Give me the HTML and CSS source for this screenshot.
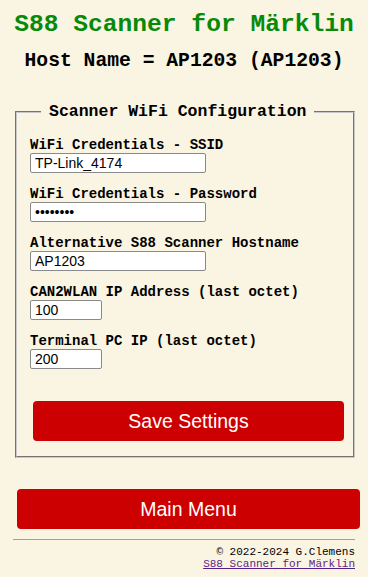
FILE: index.html
```html
<!DOCTYPE html>
<html>
<head>
<meta charset="utf-8">
<link rel="stylesheet" href="styles.css">
</head>
<body>
<h1 class="title">S88 Scanner for Märklin</h1>
<h2 class="host">Host Name = AP1203 (AP1203)</h2>
<fieldset class="box">
  <legend class="legend">Scanner WiFi Configuration</legend>
  <div class="field">
    <label class="lbl">WiFi Credentials - SSID</label>
    <input class="inp wide" type="text" value="TP-Link_4174">
  </div>
  <div class="field">
    <label class="lbl">WiFi Credentials - Password</label>
    <input class="inp wide" type="password" value="12345678">
  </div>
  <div class="field">
    <label class="lbl">Alternative S88 Scanner Hostname</label>
    <input class="inp wide" type="text" value="AP1203">
  </div>
  <div class="field">
    <label class="lbl">CAN2WLAN IP Address (last octet)</label>
    <input class="inp narrow" type="text" value="100">
  </div>
  <div class="field">
    <label class="lbl">Terminal PC IP (last octet)</label>
    <input class="inp narrow" type="text" value="200">
  </div>
  <button class="btn save">Save Settings</button>
</fieldset>
<button class="btn main">Main Menu</button>
<hr class="rule">
<div class="foot">
  <div>© 2022-2024 G.Clemens</div>
  <a class="flink" href="#">S88 Scanner for Märklin</a>
</div>
</body>
</html>
```
FILE: styles.css
```css
html, body { margin: 0; padding: 0; }
body {
  background: #faf4e2;
  font-family: "Liberation Mono", "DejaVu Sans Mono", monospace;
  color: #000;
  width: 368px;
  height: 577px;
  overflow: hidden;
}
.title {
  margin: 10px 0 0 0;
  text-align: center;
  color: #078a07;
  font-size: 24.6px;
  font-weight: bold;
  line-height: 30px;
}
.host {
  margin: 9px 0 0 0;
  text-align: center;
  font-size: 19.7px;
  font-weight: bold;
  line-height: 24px;
}
.box {
  margin: 29px 0 0 15px;
  width: 338px;
  box-sizing: border-box;
  border: 2px groove #c8c8c8;
  padding: 16px 9px 15px 13px;
  display: flex;
  flex-direction: column;
  gap: 14px;
}
.legend {
  font-size: 16.5px;
  font-weight: bold;
  padding: 0 8px;
  margin-left: 11px;
  line-height: 20px;
}
.field { display: flex; flex-direction: column; }
.lbl {
  font-size: 14px;
  font-weight: bold;
  line-height: 15px;
}
.inp {
  height: 20px;
  box-sizing: border-box;
  border: 1px solid #8a8a8a;
  border-radius: 2px;
  background: #fff;
  font-family: "Liberation Sans", Arial, sans-serif;
  font-size: 14px;
  padding: 0 4px;
  margin: 0;
  color: #000;
}
.wide { width: 176px; }
.narrow { width: 72px; }
.btn {
  border: none;
  border-radius: 4px;
  background: #cc0000;
  color: #fff;
  font-family: "Liberation Sans", Arial, sans-serif;
  font-size: 19.5px;
  height: 40px;
  padding: 0;
}
.save {
  margin: 18px 0 0 3px;
  width: 311px;
}
.main {
  display: block;
  margin: 31px 0 0 17px;
  width: 343px;
}
.rule {
  margin: 10px 0 0 13px;
  width: 342px;
  border: none;
  border-top: 1px solid #a0a0a0;
  height: 0;
}
.foot {
  width: 355px;
  text-align: right;
  font-size: 11px;
  line-height: 12px;
  margin-top: 6px;
}
.flink { color: #5b1f8a; }
```
